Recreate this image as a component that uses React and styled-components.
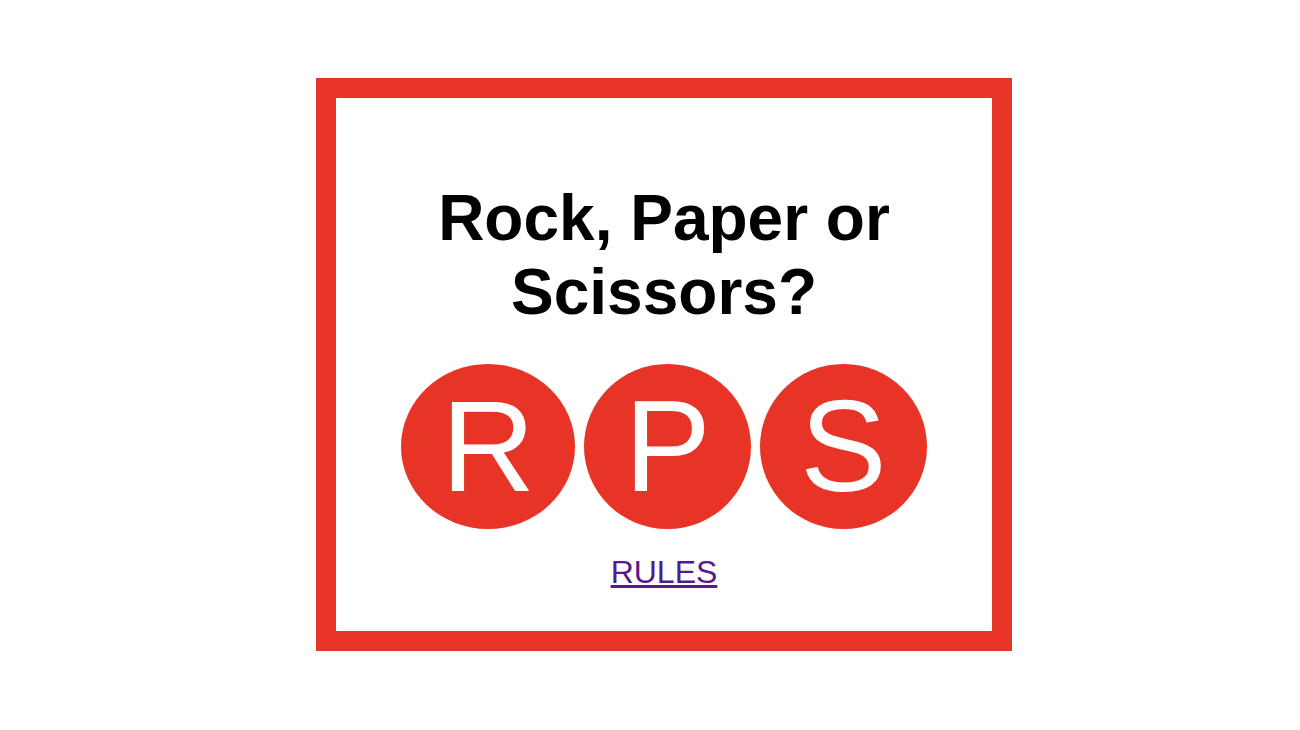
import React from "react";
import styled, { createGlobalStyle } from "styled-components";

const GlobalStyle = createGlobalStyle`
  html, body {
    margin: 0;
    padding: 0;
    background: #ffffff;
    font-family: "Liberation Sans", Arial, sans-serif;
  }
`;

const RED = "#e83427";

const Page = styled.div`
  display: flex;
  align-items: flex-start;
  justify-content: center;
  height: 730px;
  padding: 78px 0 0 28px;
  box-sizing: border-box;
`;

const Frame = styled.div`
  box-sizing: border-box;
  width: 696px;
  height: 573px;
  border: 20px solid ${RED};
  display: flex;
  flex-direction: column;
  align-items: center;
  padding-top: 83px;
`;

const Title = styled.h1`
  margin: 0;
  width: 560px;
  font-size: 64px;
  font-weight: bold;
  line-height: normal;
  text-align: center;
  color: #000;
`;

const Choices = styled.div`
  display: flex;
  gap: 9px;
  margin-top: 35px;
`;

const Choice = styled.button`
  height: 165px;
  padding: 0 40px;
  border: none;
  border-radius: 50%;
  background: ${RED};
  color: #fff;
  font-family: "Liberation Sans", Arial, sans-serif;
  font-size: 130px;
  line-height: 165px;
  cursor: pointer;
`;

const RulesLink = styled.a`
  margin-top: 25px;
  font-size: 32px;
  line-height: normal;
  color: #551a8b;
  text-decoration: underline;
`;

const choices = ["R", "P", "S"];

export default function App() {
  return (
    <>
      <GlobalStyle />
      <Page>
        <Frame>
          <Title>Rock, Paper or Scissors?</Title>
          <Choices>
            {choices.map((c) => (
              <Choice key={c}>{c}</Choice>
            ))}
          </Choices>
          <RulesLink href="#rules">RULES</RulesLink>
        </Frame>
      </Page>
    </>
  );
}
